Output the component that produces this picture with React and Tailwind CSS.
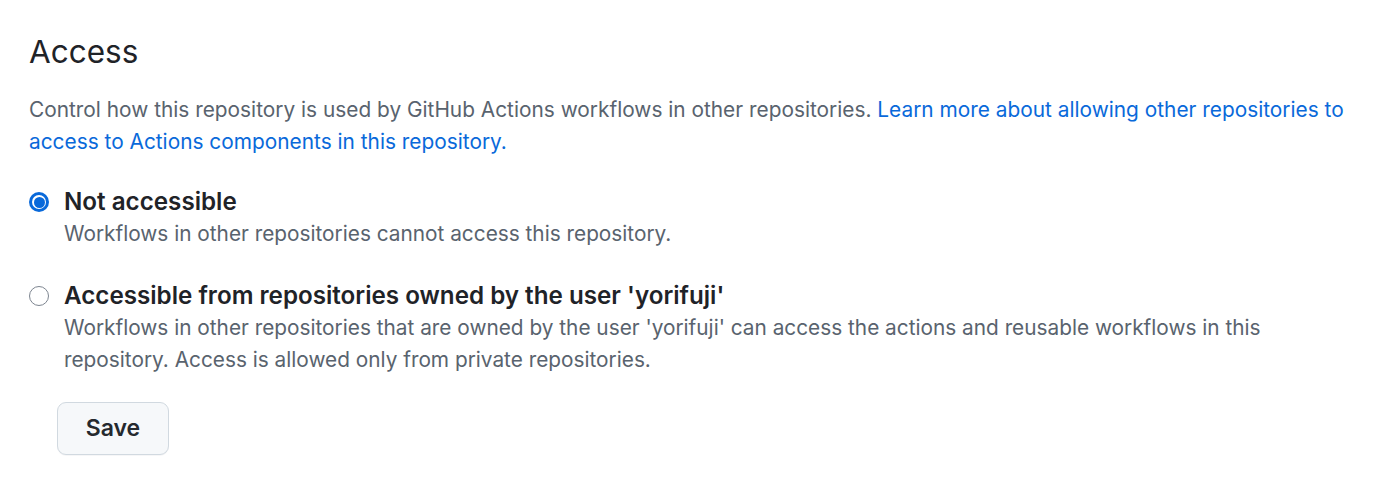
import React from "react";

const Radio = ({ checked }) =>
  checked ? (
    <span className="flex h-[20px] w-[20px] shrink-0 items-center justify-center rounded-full bg-[#0969da]">
      <span className="flex h-[14px] w-[14px] items-center justify-center rounded-full bg-white">
        <span className="h-[11px] w-[11px] rounded-full bg-[#0969da]" />
      </span>
    </span>
  ) : (
    <span className="h-[20px] w-[20px] shrink-0 rounded-full border-[1.5px] border-[#7d8590] bg-white" />
  );

const Option = ({ checked, label, children }) => (
  <div className="flex items-start gap-[15px]">
    <div className="flex h-[32px] items-center">
      <Radio checked={checked} />
    </div>
    <div>
      <div className="text-[24.2px] font-semibold leading-[32px] text-[#1f2328]">{label}</div>
      <div className="text-[20.8px] leading-[32px] text-[#59636e]">{children}</div>
    </div>
  </div>
);

export default function App() {
  return (
    <div
      className="h-[488px] w-[1400px] bg-white pl-[29px] pr-[42px] pt-[30px]"
      style={{ fontFamily: "Inter, 'Liberation Sans', sans-serif" }}
    >
      <h2 className="text-[31.5px] font-normal leading-[44px] text-[#1f2328]">Access</h2>

      <p className="mt-[20px] text-[20.85px] leading-[32px] text-[#59636e]">
        Control how this repository is used by GitHub Actions workflows in other repositories.{" "}
        <a className="text-[#0969da]" href="#">
          Learn more about allowing other repositories to access to Actions components in this repository.
        </a>
      </p>

      <div className="mt-[28px] flex flex-col gap-[30px]">
        <Option checked label="Not accessible">
          Workflows in other repositories cannot access this repository.
        </Option>
        <Option label="Accessible from repositories owned by the user 'yorifuji'">
          Workflows in other repositories that are owned by the user 'yorifuji' can access the actions and reusable
          workflows in this repository. Access is allowed only from private repositories.
        </Option>
      </div>

      <div className="mt-[26px] pl-[28px]">
        <button className="h-[53px] w-[112px] rounded-[9px] border border-[#d1d9e0] bg-[#f6f8fa] text-[23px] font-semibold text-[#25292e] shadow-[0_1px_0_rgba(31,35,40,0.04)]">
          Save
        </button>
      </div>
    </div>
  );
}
